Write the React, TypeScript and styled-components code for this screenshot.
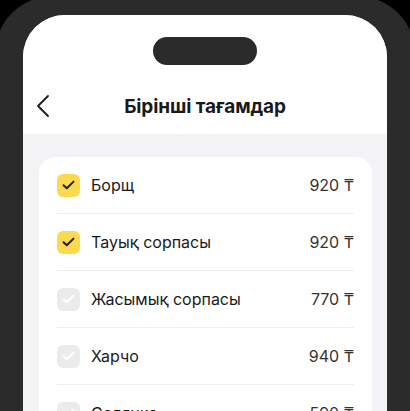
import React from "react";
import styled, { createGlobalStyle } from "styled-components";

const Global = createGlobalStyle`
  html, body {
    margin: 0;
    padding: 0;
    background: #000;
    overflow: hidden;
    height: 100%;
  }
  body {
    font-family: Inter, "Noto Sans", "DejaVu Sans", sans-serif;
    -webkit-font-smoothing: antialiased;
  }
`;

const Phone = styled.div`
  width: 420px;
  min-height: 440px;
  margin: -4px -5px 0;
  padding: 19px 28px 0;
  box-sizing: border-box;
  background: #2b2b2b;
  border-radius: 58px 58px 0 0;
`;

const Screen = styled.div`
  background: #fff;
  border-radius: 42px 42px 0 0;
  overflow: hidden;
  min-height: 420px;
  display: flex;
  flex-direction: column;
`;

const Header = styled.header`
  height: 119px;
  display: flex;
  flex-direction: column;
  align-items: center;
  background: #fff;
`;

const Island = styled.div`
  width: 104px;
  height: 28px;
  margin-top: 22px;
  border-radius: 14px;
  background: #2b2b2b;
`;

const NavRow = styled.div`
  margin-top: 20px;
  height: 42px;
  width: 100%;
  display: grid;
  grid-template-columns: 60px 1fr 60px;
  align-items: center;
`;

const BackButton = styled.button`
  border: 0;
  background: none;
  padding: 0 0 0 12px;
  display: flex;
  align-items: center;
  cursor: pointer;
  height: 42px;
`;

const Title = styled.h1`
  margin: 0;
  text-align: center;
  font-size: 19px;
  font-weight: 700;
  color: #1a1a1a;
  letter-spacing: -0.1px;
`;

const Content = styled.main`
  flex: 1;
  background: #f3f3f5;
  padding: 23px 15px 0 16px;
`;

const Card = styled.section`
  background: #fff;
  border-radius: 16px;
  padding: 0 18px;
`;

const Row = styled.div`
  height: 56px;
  display: flex;
  align-items: center;
  border-bottom: 1px solid #ececee;
  &:last-child {
    border-bottom: 0;
  }
`;

const Box = styled.span<{ $checked: boolean }>`
  width: 23px;
  height: 23px;
  border-radius: 6px;
  flex: none;
  display: flex;
  align-items: center;
  justify-content: center;
  background: ${(p) => (p.$checked ? "#fdd94f" : "#ebebeb")};
  color: ${(p) => (p.$checked ? "#1f1f1f" : "#ffffff")};
`;

const Name = styled.span`
  margin-left: 11px;
  flex: 1;
  font-size: 16px;
  color: #1a1a1a;
`;

const Price = styled.span`
  font-size: 16px;
  color: #333;
`;

const items = [
  { name: "Борщ", price: "920 ₸", checked: true },
  { name: "Тауық сорпасы", price: "920 ₸", checked: true },
  { name: "Жасымық сорпасы", price: "770 ₸", checked: false },
  { name: "Харчо", price: "940 ₸", checked: false },
  { name: "Солянка", price: "590 ₸", checked: false },
];

const Check = () => (
  <svg width="13" height="10" viewBox="0 0 13 10" fill="none">
    <path
      d="M1.5 5.2 L4.8 8.3 L11.5 1.6"
      stroke="currentColor"
      strokeWidth="2"
      strokeLinecap="round"
      strokeLinejoin="round"
    />
  </svg>
);

export default function App() {
  return (
    <>
      <Global />
      <Phone>
        <Screen>
          <Header>
            <Island />
            <NavRow>
              <BackButton aria-label="back">
                <svg width="16" height="24" viewBox="0 0 16 24" fill="none">
                  <path
                    d="M13 2 L3 12 L13 22"
                    stroke="#1a1a1a"
                    strokeWidth="1.8"
                    strokeLinecap="round"
                    strokeLinejoin="round"
                  />
                </svg>
              </BackButton>
              <Title>Бірінші тағамдар</Title>
              <span />
            </NavRow>
          </Header>
          <Content>
            <Card>
              {items.map((it) => (
                <Row key={it.name}>
                  <Box $checked={it.checked}>
                    <Check />
                  </Box>
                  <Name>{it.name}</Name>
                  <Price>{it.price}</Price>
                </Row>
              ))}
            </Card>
          </Content>
        </Screen>
      </Phone>
    </>
  );
}
